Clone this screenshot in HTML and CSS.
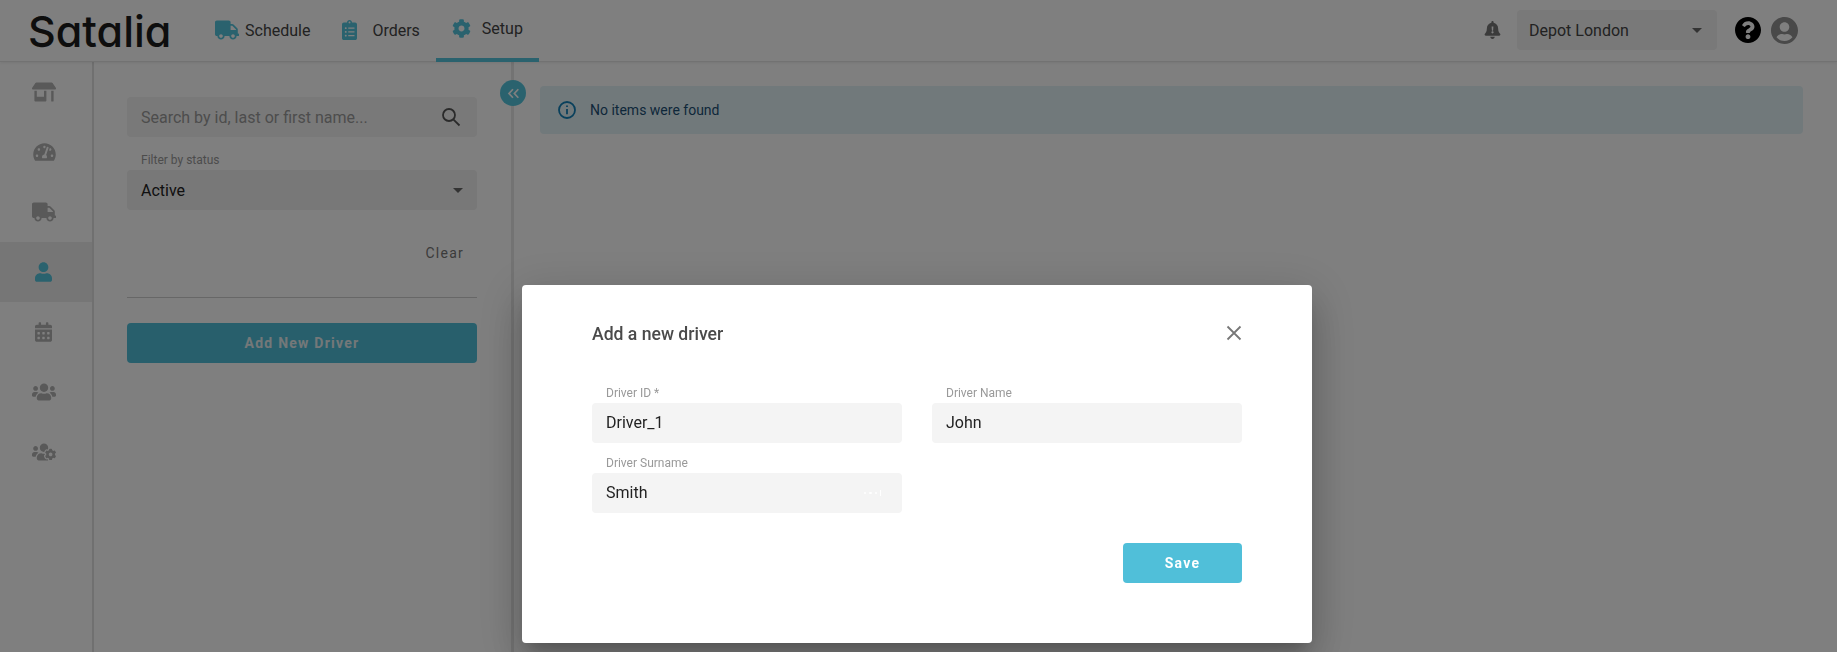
FILE: index.html
```html
<!DOCTYPE html>
<html lang="en">
<head>
<meta charset="utf-8">
<title>Satalia - Drivers</title>
<link rel="stylesheet" href="styles.css">
</head>
<body>
<div class="app">
  <header class="topbar">
    <div class="logo">Satalia</div>
    <nav class="tabs">
      <a class="tab">
        <svg class="tab-icon truck" viewBox="0 0 640 512"><path d="M624 352h-16V243.900c0-12.700-5.100-24.900-14.100-33.900L494 110.100c-9-9-21.200-14.100-33.900-14.100H416V48c0-26.500-21.500-48-48-48H48C21.500 0 0 21.500 0 48v320c0 26.500 21.500 48 48 48h16c0 53 43 96 96 96s96-43 96-96h128c0 53 43 96 96 96s96-43 96-96h48c8.800 0 16-7.200 16-16v-32c0-8.800-7.200-16-16-16zM160 464c-26.500 0-48-21.500-48-48s21.500-48 48-48 48 21.500 48 48-21.500 48-48 48zm320 0c-26.500 0-48-21.500-48-48s21.500-48 48-48 48 21.500 48 48-21.500 48-48 48zm80-208H416V144h44.100l99.900 99.900V256z"/></svg>
        <span>Schedule</span>
      </a>
      <a class="tab tab-orders">
        <svg class="tab-icon clip" viewBox="0 0 384 512"><path d="M336 64h-80c0-35.300-28.700-64-64-64s-64 28.700-64 64H48C21.500 64 0 85.500 0 112v352c0 26.500 21.500 48 48 48h288c26.500 0 48-21.500 48-48V112c0-26.500-21.500-48-48-48zM96 424c-13.300 0-24-10.700-24-24s10.700-24 24-24 24 10.700 24 24-10.700 24-24 24zm0-96c-13.300 0-24-10.700-24-24s10.700-24 24-24 24 10.700 24 24-10.700 24-24 24zm0-96c-13.300 0-24-10.700-24-24s10.700-24 24-24 24 10.700 24 24-10.700 24-24 24zm96-192c13.300 0 24 10.700 24 24s-10.700 24-24 24-24-10.700-24-24 10.700-24 24-24zm128 368c0 4.400-3.600 8-8 8H168c-4.400 0-8-3.600-8-8v-16c0-4.400 3.600-8 8-8h144c4.400 0 8 3.600 8 8v16zm0-96c0 4.400-3.600 8-8 8H168c-4.400 0-8-3.600-8-8v-16c0-4.400 3.600-8 8-8h144c4.400 0 8 3.600 8 8v16zm0-96c0 4.400-3.600 8-8 8H168c-4.400 0-8-3.600-8-8v-16c0-4.400 3.600-8 8-8h144c4.400 0 8 3.600 8 8v16z"/></svg>
        <span>Orders</span>
      </a>
      <a class="tab tab-active">
        <svg class="tab-icon cog" viewBox="0 0 512 512"><path d="M487.400 315.700l-42.600-24.600c4.300-23.200 4.300-47 0-70.200l42.600-24.600c4.900-2.800 7.100-8.600 5.500-14-11.100-35.600-30-67.800-54.700-94.600-3.800-4.100-10-5.100-14.800-2.300L380.800 110c-17.900-15.400-38.500-27.300-60.800-35.100V25.800c0-5.600-3.900-10.500-9.400-11.700-36.700-8.200-74.300-7.800-109.200 0-5.500 1.200-9.400 6.100-9.400 11.700V75c-22.200 7.900-42.800 19.800-60.800 35.100L88.700 85.500c-4.900-2.800-11-1.900-14.800 2.300-24.700 26.700-43.600 58.900-54.700 94.600-1.700 5.400.6 11.200 5.500 14L67.300 221c-4.300 23.200-4.300 47 0 70.200l-42.600 24.600c-4.900 2.800-7.100 8.600-5.500 14 11.100 35.600 30 67.800 54.700 94.600 3.800 4.100 10 5.100 14.800 2.300l42.600-24.600c17.900 15.400 38.500 27.300 60.800 35.100v49.200c0 5.600 3.900 10.500 9.400 11.700 36.700 8.200 74.300 7.800 109.200 0 5.500-1.200 9.400-6.100 9.400-11.700v-49.200c22.200-7.900 42.800-19.800 60.800-35.100l42.600 24.600c4.900 2.800 11 1.900 14.800-2.300 24.700-26.700 43.600-58.900 54.700-94.600 1.500-5.500-.7-11.300-5.600-14.100zM256 336c-44.100 0-80-35.900-80-80s35.900-80 80-80 80 35.900 80 80-35.900 80-80 80z"/></svg>
        <span>Setup</span>
      </a>
    </nav>
    <div class="top-right">
      <svg class="bell" viewBox="0 0 448 512"><path fill-rule="evenodd" d="M224 512c35.300 0 64-28.700 64-64H160c0 35.300 28.700 64 64 64zm215.400-149.700c-19.300-20.800-55.500-52-55.500-154.300 0-77.700-54.500-139.900-127.900-155.200V32c0-17.700-14.300-32-32-32s-32 14.300-32 32v20.800C118.600 68.100 64.100 130.300 64.100 208c0 102.300-36.200 133.500-55.500 154.300-6 6.500-8.700 14.200-8.600 21.700.1 16.400 13 32 32.100 32h383.800c19.100 0 32-15.600 32.100-32 .1-7.500-2.600-15.300-8.600-21.700zM224 352c-17.700 0-32-14.300-32-32s14.300-32 32-32 32 14.300 32 32-14.300 32-32 32zm25.200-187.100l-8 104c-.3 4.100-3.800 7.100-8 7.100h-18.400c-4.200 0-7.700-3-8-7.100l-8-104c-.4-4.700 3.300-8.900 8-8.900h34.400c4.700 0 8.400 4.200 8 8.900z"/></svg>
      <div class="depot">
        <span>Depot London</span>
        <i class="caret"></i>
      </div>
      <svg class="help" viewBox="8 8 496 496"><path d="M504 256c0 136.997-111.043 248-248 248S8 392.997 8 256C8 119.083 119.043 8 256 8s248 111.083 248 248zM262.655 90c-54.497 0-89.255 22.957-116.549 63.758-3.536 5.286-2.353 12.415 2.715 16.258l34.699 26.310c5.205 3.947 12.621 3.008 16.665-2.122 17.864-22.658 30.113-35.797 57.303-35.797 20.429 0 45.698 13.148 45.698 32.958 0 14.976-12.363 22.667-32.534 33.976C247.128 238.528 216 254.941 216 296v4c0 6.627 5.373 12 12 12h56c6.627 0 12-5.373 12-12v-1.333c0-28.462 83.186-29.647 83.186-106.667 0-58.002-60.165-102-116.531-102zM256 338c-25.365 0-46 20.635-46 46 0 25.364 20.635 46 46 46s46-20.636 46-46c0-25.365-20.635-46-46-46z"/></svg>
      <svg class="account" viewBox="0 8 496 496"><path d="M248 8C111 8 0 119 0 256s111 248 248 248 248-111 248-248S385 8 248 8zm0 96c48.600 0 88 39.400 88 88s-39.400 88-88 88-88-39.400-88-88 39.400-88 88-88zm0 344c-58.700 0-111.300-26.600-146.500-68.200 18.800-35.400 55.600-59.800 98.500-59.800 2.400 0 4.800.4 7.100 1.100 13 4.200 26.600 6.900 40.900 6.900 14.300 0 28-2.700 40.900-6.900 2.300-.7 4.700-1.100 7.100-1.100 42.900 0 79.700 24.400 98.500 59.800C359.300 421.400 306.700 448 248 448z"/></svg>
    </div>
  </header>

  <div class="main">
    <aside class="sidebar">
      <div class="side-item"><svg class="side-icon wide" viewBox="0 0 640 512"><path d="M320 384H128V224H64v256c0 17.700 14.300 32 32 32h256c17.700 0 32-14.300 32-32V224h-64v160zm314.600-241.800l-85.300-128c-6-8.900-16-14.200-26.700-14.200H117.400c-10.700 0-20.700 5.300-26.600 14.200l-85.300 128c-14.200 21.300 1 49.800 26.600 49.800H608c25.500 0 40.700-28.500 26.600-49.800zM512 496c0 8.800 7.200 16 16 16h32c8.800 0 16-7.200 16-16V224h-64v272z"/></svg></div>
      <div class="side-item"><svg class="side-icon gauge" viewBox="0 0 576 512"><path d="M288 32C128.940 32 0 160.940 0 320c0 52.800 14.250 102.260 39.060 144.800 5.610 9.620 16.300 15.200 27.440 15.200h443c11.140 0 21.830-5.580 27.440-15.200C561.750 422.260 576 372.800 576 320c0-159.060-128.940-288-288-288zm0 64c14.710 0 26.580 10.130 30.320 23.650-1.110 2.260-2.640 4.230-3.450 6.670l-9.220 27.670c-5.130 3.490-10.970 6.010-17.640 6.010-17.670 0-32-14.330-32-32S270.330 96 288 96zM96 384c-17.670 0-32-14.330-32-32s14.330-32 32-32 32 14.330 32 32-14.330 32-32 32zm48-160c-17.670 0-32-14.330-32-32s14.330-32 32-32 32 14.330 32 32-14.330 32-32 32zm246.770-72.410l-61.330 184C343.130 347.330 352 364.540 352 384c0 11.720-3.380 22.550-8.880 32H232.880c-5.500-9.450-8.880-20.280-8.880-32 0-33.940 26.500-61.430 59.900-63.590l61.340-184.010c4.170-12.560 17.730-19.450 30.360-15.170 12.570 4.190 19.350 17.790 15.170 30.360zm14.660 57.200l15.520-46.550c3.470-1.290 7.130-2.230 11.050-2.230 17.670 0 32 14.330 32 32s-14.330 32-32 32c-11.380-.01-20.890-6.280-26.570-15.220zM480 384c-17.670 0-32-14.330-32-32s14.330-32 32-32 32 14.330 32 32-14.330 32-32 32z"/></svg></div>
      <div class="side-item"><svg class="side-icon wide" viewBox="0 0 640 512"><path d="M624 352h-16V243.900c0-12.700-5.100-24.900-14.100-33.900L494 110.100c-9-9-21.200-14.100-33.900-14.100H416V48c0-26.500-21.500-48-48-48H48C21.500 0 0 21.500 0 48v320c0 26.500 21.500 48 48 48h16c0 53 43 96 96 96s96-43 96-96h128c0 53 43 96 96 96s96-43 96-96h48c8.800 0 16-7.200 16-16v-32c0-8.800-7.200-16-16-16zM160 464c-26.500 0-48-21.500-48-48s21.500-48 48-48 48 21.500 48 48-21.500 48-48 48zm320 0c-26.500 0-48-21.500-48-48s21.500-48 48-48 48 21.500 48 48-21.500 48-48 48zm80-208H416V144h44.100l99.900 99.900V256z"/></svg></div>
      <div class="side-item side-active"><svg class="side-icon user" viewBox="0 0 448 512"><path d="M224 256c70.700 0 128-57.300 128-128S294.700 0 224 0 96 57.300 96 128s57.300 128 128 128zm89.600 32h-16.700c-22.200 10.200-46.900 16-72.900 16s-50.600-5.800-72.900-16h-16.700C60.200 288 0 348.200 0 422.400V464c0 26.500 21.500 48 48 48h352c26.500 0 48-21.500 48-48v-41.600c0-74.200-60.200-134.400-134.400-134.400z"/></svg></div>
      <div class="side-item"><svg class="side-icon user" viewBox="0 0 448 512"><path d="M0 464c0 26.500 21.500 48 48 48h352c26.500 0 48-21.500 48-48V192H0v272zm320-196c0-6.600 5.400-12 12-12h40c6.600 0 12 5.400 12 12v40c0 6.600-5.400 12-12 12h-40c-6.600 0-12-5.400-12-12v-40zm0 128c0-6.600 5.400-12 12-12h40c6.600 0 12 5.400 12 12v40c0 6.600-5.400 12-12 12h-40c-6.600 0-12-5.400-12-12v-40zM192 268c0-6.600 5.400-12 12-12h40c6.600 0 12 5.400 12 12v40c0 6.600-5.400 12-12 12h-40c-6.600 0-12-5.400-12-12v-40zm0 128c0-6.600 5.400-12 12-12h40c6.600 0 12 5.400 12 12v40c0 6.600-5.400 12-12 12h-40c-6.600 0-12-5.400-12-12v-40zM64 268c0-6.600 5.400-12 12-12h40c6.600 0 12 5.400 12 12v40c0 6.600-5.400 12-12 12H76c-6.600 0-12-5.400-12-12v-40zm0 128c0-6.600 5.400-12 12-12h40c6.600 0 12 5.400 12 12v40c0 6.600-5.400 12-12 12H76c-6.600 0-12-5.400-12-12v-40zM400 64h-48V16c0-8.800-7.200-16-16-16h-32c-8.800 0-16 7.200-16 16v48H160V16c0-8.800-7.200-16-16-16h-32c-8.800 0-16 7.200-16 16v48H48C21.500 64 0 85.500 0 112v48h448v-48c0-26.500-21.500-48-48-48z"/></svg></div>
      <div class="side-item"><svg class="side-icon wide" viewBox="0 0 640 512"><path d="M96 224c35.300 0 64-28.700 64-64s-28.700-64-64-64-64 28.700-64 64 28.700 64 64 64zm448 0c35.300 0 64-28.700 64-64s-28.700-64-64-64-64 28.700-64 64 28.700 64 64 64zm32 32h-64c-17.600 0-33.500 7.100-45.100 18.600 40.300 22.100 68.900 62 75.100 109.400h66c17.700 0 32-14.300 32-32v-32c0-35.300-28.700-64-64-64zm-256 0c61.900 0 112-50.100 112-112S381.900 32 320 32 208 82.100 208 144s50.100 112 112 112zm76.800 32h-8.300c-20.800 10-43.900 16-68.500 16s-47.600-6-68.500-16h-8.300C179.600 288 128 339.600 128 403.200V432c0 26.500 21.500 48 48 48h288c26.500 0 48-21.500 48-48v-28.800c0-63.600-51.600-115.200-115.200-115.200zm-223.700-13.400C161.500 263.100 145.600 256 128 256H64c-35.300 0-64 28.700-64 64v32c0 17.700 14.300 32 32 32h65.900c6.300-47.400 34.900-87.300 75.200-109.400z"/></svg></div>
      <div class="side-item"><svg class="side-icon wide" viewBox="0 0 640 512"><path d="M610.500 341.300c2.600-14.100 2.600-28.500 0-42.600l25.800-14.900c3-1.700 4.300-5.200 3.300-8.500-6.700-21.600-18.200-41.200-33.200-57.400-2.300-2.500-6-3.100-9-1.400l-25.800 14.900c-10.900-9.300-23.400-16.500-36.900-21.300v-29.800c0-3.400-2.400-6.400-5.700-7.100-22.300-5-45-4.800-66.200 0-3.300.7-5.700 3.700-5.700 7.100v29.800c-13.500 4.800-26 12-36.900 21.300l-25.800-14.900c-2.900-1.700-6.700-1.100-9 1.400-15 16.200-26.500 35.800-33.200 57.400-1 3.300.4 6.800 3.300 8.500l25.800 14.900c-2.600 14.100-2.600 28.500 0 42.600l-25.800 14.900c-3 1.700-4.300 5.200-3.300 8.500 6.700 21.600 18.200 41.100 33.200 57.400 2.300 2.500 6 3.100 9 1.400l25.800-14.900c10.900 9.300 23.400 16.500 36.900 21.300v29.800c0 3.400 2.400 6.400 5.700 7.100 22.300 5 45 4.800 66.200 0 3.300-.7 5.700-3.700 5.700-7.100v-29.800c13.500-4.800 26-12 36.900-21.300l25.800 14.900c2.900 1.700 6.700 1.100 9-1.400 15-16.200 26.500-35.800 33.200-57.400 1-3.300-.4-6.800-3.300-8.500l-25.800-14.900zM496 368.500c-26.800 0-48.500-21.800-48.500-48.500s21.800-48.500 48.500-48.500 48.500 21.800 48.500 48.500-21.700 48.500-48.500 48.500zM96 224c35.300 0 64-28.700 64-64s-28.700-64-64-64-64 28.700-64 64 28.700 64 64 64zm224 32c1.900 0 3.700-.5 5.600-.6 8.300-21.700 20.500-42.100 36.300-59.200 7.400-8 17.900-12.600 28.900-12.600 6.900 0 13.700 1.800 19.600 5.300l7.900 4.600c.8-.5 1.600-.9 2.400-1.400 7-14.600 11.200-30.800 11.200-48 0-61.900-50.100-112-112-112S208 82.100 208 144c0 61.900 50.100 112 112 112zm105.200 194.500c-2.300-1.200-4.600-2.600-6.800-3.900-8.200 4.800-15.300 9.800-27.500 9.800-10.900 0-21.400-4.600-28.900-12.600-18.300-19.800-32.300-43.900-40.200-69.600-10.700-34.500 24.900-49.700 25.800-50.300-.1-2.600-.1-5.200 0-7.800l-7.900-4.600c-3.800-2.200-7-5-9.800-8.100-3.300.2-6.500.6-9.800.6-24.600 0-47.600-6-68.500-16h-8.300C179.600 288 128 339.600 128 403.200V432c0 26.500 21.500 48 48 48h255.400c-3.700-6-6.200-12.800-6.200-20.300v-9.200zM173.100 274.600C161.500 263.100 145.600 256 128 256H64c-35.300 0-64 28.700-64 64v32c0 17.700 14.300 32 32 32h65.900c6.300-47.400 34.900-87.300 75.200-109.400z"/></svg></div>
    </aside>

    <section class="panel">
      <div class="field-search">
        <input class="search-input" type="text" placeholder="Search by id, last or first name...">
        <svg class="search-icon" viewBox="0 0 20 20"><circle cx="8" cy="8" r="6"/><path d="M12.300 12.300L18.500 18.500"/></svg>
      </div>
      <div class="filter-label">Filter by status</div>
      <div class="filter-select"><span>Active</span><i class="caret"></i></div>
      <div class="clear-row"><span class="clear">Clear</span></div>
      <hr class="divider">
      <button class="add-btn" type="button">Add New Driver</button>
      <button class="collapse" type="button" aria-label="Collapse">
        <svg viewBox="0 0 14 14"><path d="M6.500 3L2.800 7l3.700 4M11.500 3L7.800 7l3.700 4"/></svg>
      </button>
    </section>

    <section class="content">
      <div class="alert">
        <svg class="info" viewBox="0 0 20 20"><circle cx="10" cy="10" r="8"/><path d="M10 9v5.200"/><path class="info-dot" d="M10 5.600v1.500"/></svg>
        <span>No items were found</span>
      </div>
    </section>
  </div>
</div>

<div class="overlay"></div>

<div class="dialog">
  <div class="dialog-head">
    <h2>Add a new driver</h2>
    <svg class="close" viewBox="0 0 16 16"><path d="M1.500 1.500l13 13M14.500 1.500l-13 13"/></svg>
  </div>
  <div class="form-grid">
    <label class="form-field">
      <span class="form-label">Driver ID *</span>
      <input class="form-input" type="text" value="Driver_1">
    </label>
    <label class="form-field">
      <span class="form-label">Driver Name</span>
      <input class="form-input" type="text" value="John">
    </label>
    <label class="form-field">
      <span class="form-label">Driver Surname</span>
      <span class="input-wrap">
        <input class="form-input" type="text" value="Smith">
        <i class="pw-dots"><b></b><b></b><b></b><u></u></i>
      </span>
    </label>
  </div>
  <div class="dialog-actions">
    <button class="save" type="button">Save</button>
  </div>
</div>
</body>
</html>
```

FILE: styles.css
```css
* { box-sizing: border-box; }
html, body { margin: 0; height: 652px; overflow: hidden; }
body { font-family: Roboto, "Liberation Sans", sans-serif; color: #222; background: #fff; }

.app { display: flex; flex-direction: column; height: 652px; }

/* top bar */
.topbar {
  height: 62px; flex: none; display: flex; align-items: stretch;
  background: #fff; border-bottom: 1px solid #e4e4e4; box-shadow: 0 1px 3px rgba(0,0,0,.08);
  position: relative; z-index: 1;
}
.logo {
  width: 198px; padding: 6px 0 0 28px;
  font-family: Inter, "Liberation Sans", sans-serif; font-feature-settings: "cv11" 1;
  font-size: 43px; line-height: 50px; font-weight: 500; color: #1c1c1c;
}
.tabs { display: flex; }
.tab {
  display: flex; align-items: center; padding: 2px 16px 0; font-size: 16px; color: #444;
  border-bottom: 4px solid transparent; height: 62px;
}
.tab-icon { fill: #54c5dd; height: 20px; flex: none; }
.truck { width: 24px; margin-left: 1px; margin-right: 6px; }
.clip { width: 15px; margin-right: 15px; }
.cog { width: 19px; height: 19px; margin-right: 11px; }
.tab-active { border-bottom-color: #54c5dd; padding: 0 16px 1px; }

.top-right { margin-left: auto; display: flex; align-items: center; padding-right: 39px; padding-bottom: 1px; }
.bell { width: 17px; height: 18px; fill: #777; margin-right: 16px; }
.depot {
  width: 200px; height: 40px; background: #f3f3f3; border-radius: 4px;
  display: flex; align-items: center; justify-content: space-between;
  padding: 0 15px 0 12px; font-size: 16px; color: #444; margin-right: 18px;
}
.caret {
  display: block; width: 0; height: 0;
  border-left: 5px solid transparent; border-right: 5px solid transparent; border-top: 5px solid #666;
}
.help { width: 26px; height: 26px; fill: #000; margin-right: 10px; }
.account { width: 27px; height: 27px; fill: #929292; }

/* layout below header */
.main { flex: 1; display: flex; min-height: 0; }

.sidebar { width: 94px; flex: none; background: #fff; border-right: 2px solid #e0e0e0; }
.side-item { height: 60px; display: flex; align-items: center; justify-content: center; padding-right: 4px; }
.side-icon { fill: #b2b2b2; height: 20px; }
.side-icon.wide { width: 24px; }
.side-icon.gauge { width: 23px; }
.side-icon.user { width: 17px; margin-right: 2px; }
.side-active { background: #ececec; }
.side-active .side-icon { fill: #54c5dd; }

.panel {
  width: 420px; flex: none; padding: 35px 34px 0 33px; background: #fff;
  border-right: 3px solid #e6e6e6; position: relative;
}
.field-search { position: relative; height: 40px; }
.search-input {
  width: 100%; height: 40px; border: 0; outline: 0; border-radius: 4px; background: #f3f3f3;
  padding: 0 48px 0 14px; font: 400 16px Roboto, sans-serif; color: #333;
}
.search-input::placeholder { color: #9a9a9a; opacity: 1; }
.search-icon {
  position: absolute; right: 16px; top: 10px; width: 20px; height: 20px;
  fill: none; stroke: #555; stroke-width: 1.800;
}
.filter-label { font-size: 12px; line-height: 14px; color: #999; padding: 16px 0 3px 14px; }
.filter-select {
  height: 40px; background: #f0f0f0; border-radius: 4px; display: flex; align-items: center;
  justify-content: space-between; padding: 0 14px 0 14px; font-size: 16px; color: #222;
}
.clear-row { display: flex; justify-content: flex-end; padding: 33px 13px 0 0; height: 87px; }
.clear { font-size: 14px; line-height: 20px; letter-spacing: 1.250px; color: #777; }
.divider { margin: 0; border: 0; border-top: 1px solid #cfcfcf; }
.add-btn {
  display: block; width: 100%; height: 40px; margin-top: 25px; border: 0; border-radius: 4px;
  background: #50bfd9; color: #e8f0f2; font: 700 14px Roboto, sans-serif; letter-spacing: 1.250px;
}
.collapse {
  position: absolute; top: 18px; right: -15px; width: 26px; height: 26px; padding: 0; border: 0;
  border-radius: 50%; background: #54c5dd; display: flex; align-items: center; justify-content: center;
}
.collapse svg { width: 15px; height: 15px; fill: none; stroke: #fff; stroke-width: 1.600; }

.content { flex: 1; padding: 24px 34px 0 26px; background: #fff; }
.alert {
  height: 48px; background: #e3f3f7; border-radius: 4px; display: flex; align-items: center;
  padding-left: 17px; font-size: 14px; color: #1c4f74;
}
.info { width: 20px; height: 20px; fill: none; stroke: #1380b8; stroke-width: 1.800; margin-right: 13px; }

/* modal */
.overlay { position: fixed; inset: 0; background: rgba(0,0,0,.5); z-index: 5; }
.dialog {
  position: fixed; left: 522px; top: 285px; width: 790px; height: 358px; z-index: 6;
  padding: 30px 70px 0; background: #fff; border-radius: 4px;
  box-shadow: 0 11px 15px -7px rgba(0,0,0,.2), 0 24px 38px 3px rgba(0,0,0,.14), 0 9px 46px 8px rgba(0,0,0,.12);
}
.dialog-head { display: flex; justify-content: space-between; align-items: center; height: 36px; }
.dialog-head h2 { margin: 0; padding-top: 1px; font-size: 17.600px; font-weight: 500; color: #4a4a4a; }
.close { width: 16px; height: 16px; fill: none; stroke: #777; stroke-width: 1.800; }

.form-grid { display: grid; grid-template-columns: 310px 310px; column-gap: 30px; row-gap: 13px; margin-top: 35px; }
.form-field { display: block; }
.form-label { display: block; font-size: 12px; line-height: 14px; color: #999; padding: 0 0 3px 14px; }
.form-input {
  display: block; width: 100%; height: 40px; border: 0; outline: 0; border-radius: 4px; background: #f4f4f4;
  padding: 0 14px 2px; font: 400 16px Roboto, sans-serif; color: #222;
}
.input-wrap { display: block; position: relative; }
.pw-dots { position: absolute; right: 21px; top: 17px; display: flex; align-items: center; gap: 3px; }
.pw-dots b { width: 2.500px; height: 2.500px; border-radius: 50%; background: #fff; }
.pw-dots u { width: 1px; height: 6px; background: #fff; }

.dialog-actions { display: flex; justify-content: flex-end; margin-top: 30px; }
.save {
  width: 119px; height: 40px; border: 0; border-radius: 4px; background: #50bfd9; color: #fff;
  font: 700 14px Roboto, sans-serif; letter-spacing: 1.250px;
}
```
